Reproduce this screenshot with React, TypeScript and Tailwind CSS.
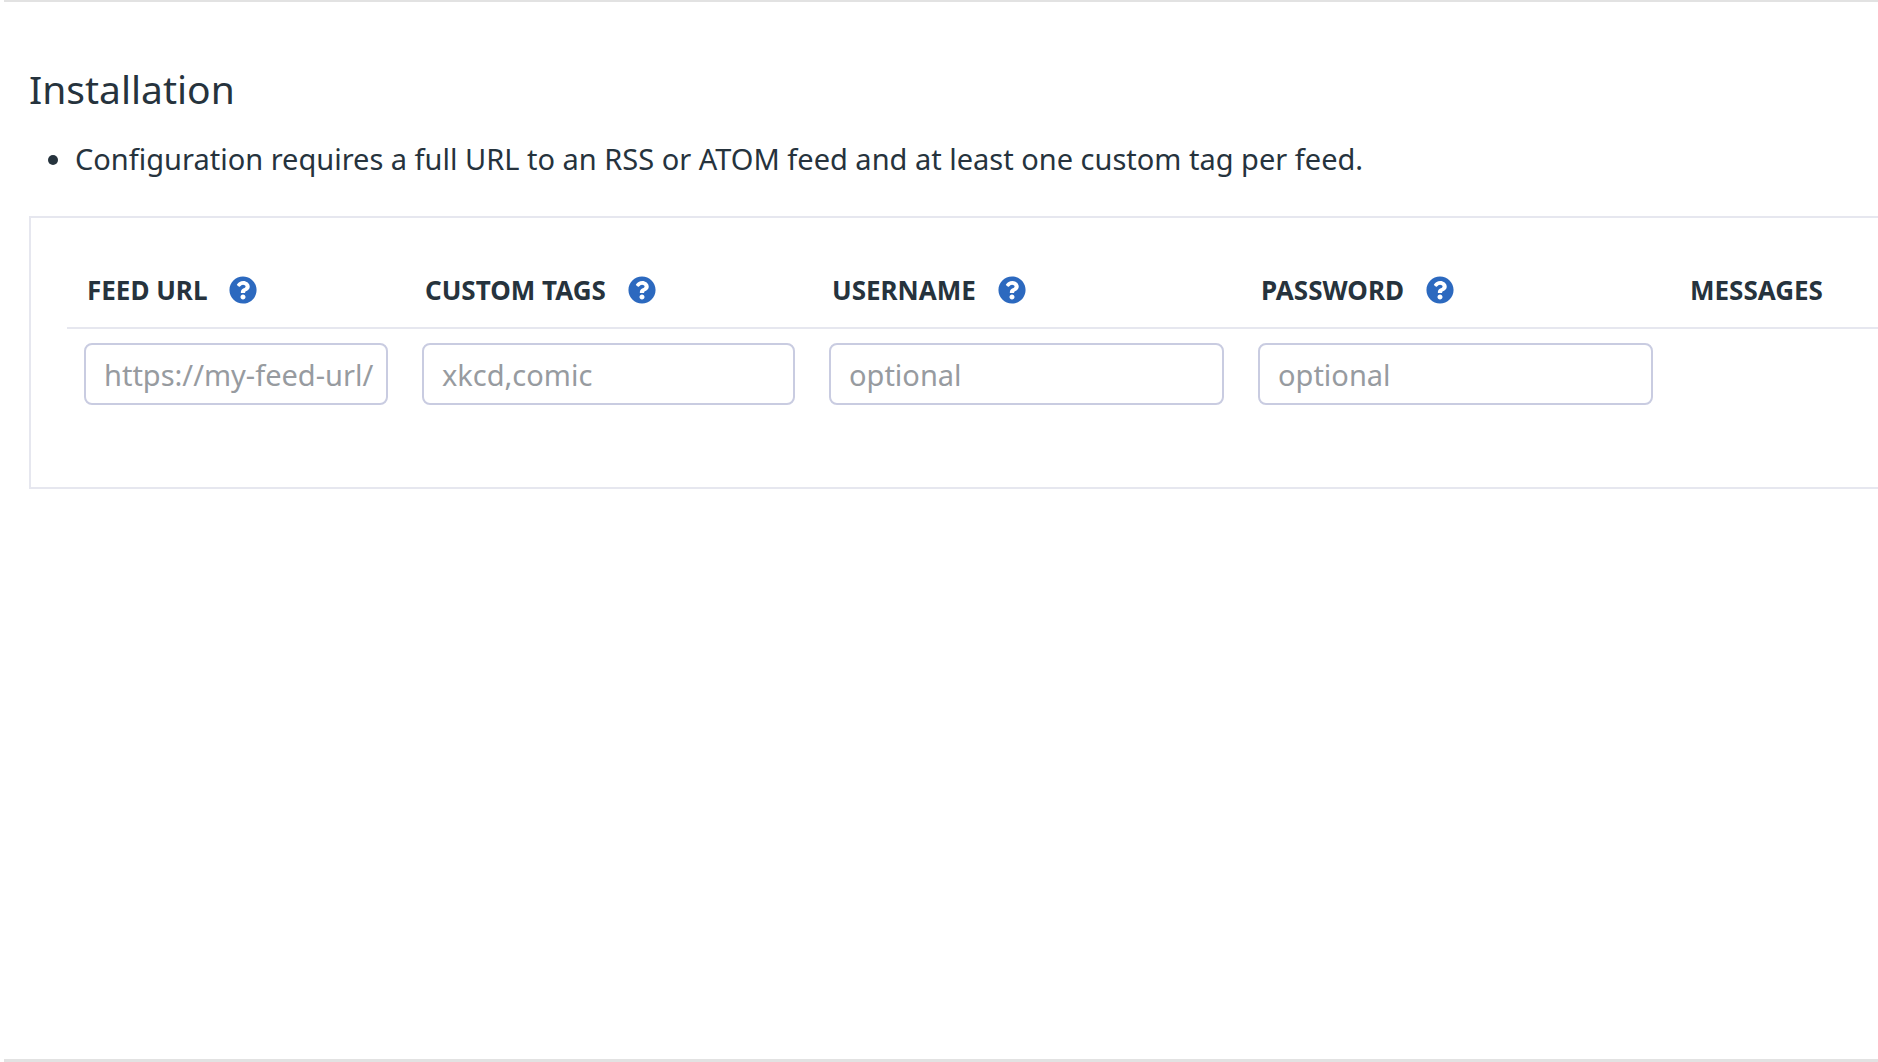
import { useId } from "react";
import { FaQuestionCircle } from "react-icons/fa";

const columns = [
  { label: "FEED URL", placeholder: "https://my-feed-url/", width: "w-[338px]" },
  { label: "CUSTOM TAGS", placeholder: "xkcd,comic", width: "w-[407px]" },
  { label: "USERNAME", placeholder: "optional", width: "w-[429px]" },
  { label: "PASSWORD", placeholder: "optional", width: "w-[429px]" },
];

export default function App() {
  const id = useId();
  return (
    <main className="flex min-h-screen flex-col overflow-x-hidden bg-white font-['Noto_Sans',sans-serif] text-[#26333d]">
      <section className="ml-1 flex-1 border-t-2 border-[#e2e2e2] pt-16 pl-[25px]">
        <h1 className="text-[39px] leading-[46px]">Installation</h1>
        <ul className="mt-[26px] list-disc pl-[46px] text-[29px] leading-[42px]">
          <li>Configuration requires a full URL to an RSS or ATOM feed and at least one custom tag per feed.</li>
        </ul>
        <div className="mt-9 border-2 border-r-0 border-[#e6e7ef] pt-12 pb-[82px] pl-9">
          <table className="w-full table-fixed border-collapse">
            <thead>
              <tr className="border-b-2 border-[#e6e7ef]">
                {columns.map((c, i) => (
                  <th key={c.label} className={`${c.width} pb-[13px] pl-5 text-left`}>
                    <div className="flex items-center gap-[22px]">
                      <label htmlFor={id + i} className="text-[26px] leading-[48px] font-bold">{c.label}</label>
                      <button type="button" aria-label={`Help for ${c.label}`}>
                        <FaQuestionCircle className="size-7 text-[#2c69bf]" aria-hidden="true" />
                      </button>
                    </div>
                  </th>
                ))}
                <th className="pb-[13px] pl-5 text-left text-[26px] leading-[48px] font-bold">MESSAGES</th>
              </tr>
            </thead>
            <tbody>
              <tr>
                {columns.map((c, i) => (
                  <td key={c.label} className="pt-[14px] pr-[17px] pl-[17px]">
                    <input
                      id={id + i}
                      type="text"
                      placeholder={c.placeholder}
                      className="block h-[62px] w-full rounded-lg border-2 border-[#c9cce1] pr-2 pl-[18px] text-[29px] placeholder:text-[#979ba0]"
                    />
                  </td>
                ))}
                <td />
              </tr>
            </tbody>
          </table>
        </div>
      </section>
      <hr className="ml-1 border-t-3 border-[#e2e2e2]" />
    </main>
  );
}
